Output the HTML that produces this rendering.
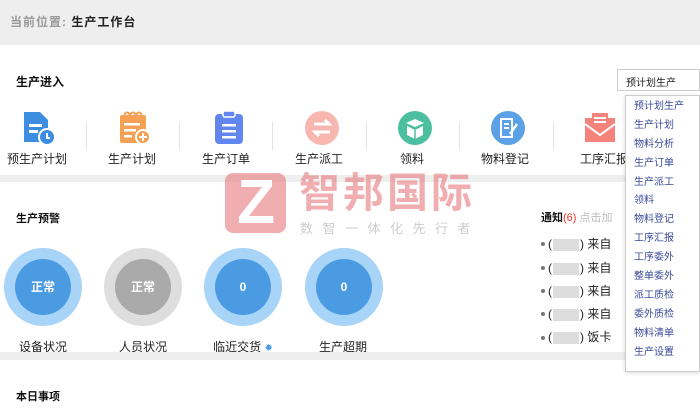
<!DOCTYPE html>
<html><head><meta charset="utf-8"><style>
*{margin:0;padding:0;box-sizing:border-box}
body{width:700px;height:408px;overflow:hidden;background:#fff;font-family:"Liberation Sans","Noto Sans CJK SC",sans-serif;font-size:12px;color:#333;position:relative}
.a{position:absolute}
.ic{position:absolute;top:110px;width:36px;height:36px}
.lb{position:absolute;top:150px;width:90px;text-align:center;font-size:12px;color:#222}
.dv{position:absolute;top:122px;width:1px;height:28px;background:#e3e3e3}
.ring{position:absolute;top:248px;width:78px;height:78px;border-radius:50%;background:#a8d4f8}
.ring div{position:absolute;left:11px;top:11px;width:56px;height:56px;border-radius:50%;background:#4b9be2;color:#fff;font-weight:bold;font-size:12px;text-align:center;line-height:56px}
.cl{position:absolute;top:338px;width:100px;text-align:center;font-size:12px;color:#222}
.dd div{height:18.9px;line-height:18.9px;padding-left:8px;color:#3a4a9a;font-size:10px}
.nt{position:absolute;left:548px;font-size:12px;color:#222}
.nt i{display:inline-block;width:26px;height:12px;background:#ddd;vertical-align:middle;margin:0 1px}
.bl{position:absolute;left:541px;width:4px;height:4px;border-radius:50%;background:#777}
</style></head><body>
<div class="a" style="left:0;top:0;width:700px;height:45px;background:#eeeeee"></div>
<div class="a" style="left:10px;top:13px;font-size:12px;color:#999;font-weight:bold;letter-spacing:1px">当前位置: <span style="color:#222">生产工作台</span></div>
<div class="a" style="left:16px;top:73px;font-weight:bold;font-size:12px;color:#111">生产进入</div>
<div class="a" style="left:617px;top:69px;width:83px;height:22px;border:1px solid #ccc;background:#fff;font-size:10px;padding:4px 0 0 8px;color:#222">预计划生产</div>
<svg class="ic" style="left:20px" viewBox="0 0 36 36"><path d="M4 2h16l8 8v22H4z" fill="#3d8ee0"/><rect x="9" y="14" width="13" height="3" fill="#fff"/><rect x="9" y="20" width="9" height="3" fill="#fff"/><circle cx="27" cy="27" r="8" fill="#3d8ee0" stroke="#fff" stroke-width="2"/><path d="M27 23v5h3" stroke="#fff" stroke-width="2" fill="none"/></svg>
<svg class="ic" style="left:117px" viewBox="0 0 36 36"><rect x="3" y="5" width="26" height="28" rx="2" fill="#f4a156"/><circle cx="10" cy="5" r="2.5" fill="none" stroke="#f4a156" stroke-width="2"/><circle cx="16" cy="5" r="2.5" fill="none" stroke="#f4a156" stroke-width="2"/><circle cx="22" cy="5" r="2.5" fill="none" stroke="#f4a156" stroke-width="2"/><rect x="7" y="13" width="16" height="2.5" fill="#fff"/><rect x="7" y="19" width="12" height="2.5" fill="#fff"/><rect x="7" y="25" width="8" height="2.5" fill="#fff"/><circle cx="26" cy="27" r="7" fill="#f4a156" stroke="#fff" stroke-width="2"/><path d="M26 23v8M22 27h8" stroke="#fff" stroke-width="2"/></svg>
<svg class="ic" style="left:211px" viewBox="0 0 36 36"><rect x="4" y="4" width="28" height="30" rx="4" fill="#6186f0"/><rect x="12" y="1" width="12" height="6" rx="2" fill="#6186f0" stroke="#fff" stroke-width="1.5"/><rect x="11" y="14" width="14" height="2.5" fill="#fff"/><rect x="11" y="20" width="14" height="2.5" fill="#fff"/><rect x="11" y="26" width="14" height="2.5" fill="#fff"/></svg>
<svg class="ic" style="left:304px" viewBox="0 0 36 36"><circle cx="18" cy="18" r="17" fill="#f7b7b0"/><path d="M10 14h15l-4-4M26 22H11l4 4" stroke="#fff" stroke-width="3" fill="none"/></svg>
<svg class="ic" style="left:397px" viewBox="0 0 36 36"><circle cx="18" cy="18" r="17" fill="#4bbf9f"/><path d="M9 13l9-4 9 4-9 4z" fill="#fff"/><path d="M10 16v9l8 4 8-4v-9l-8 4z" fill="#fff"/><path d="M18 20v9" stroke="#4bbf9f" stroke-width="1.5"/></svg>
<svg class="ic" style="left:490px" viewBox="0 0 36 36"><circle cx="18" cy="18" r="17" fill="#5aa1e6"/><path d="M11 9h11v18H11z" fill="none" stroke="#fff" stroke-width="2"/><path d="M14 14h5M14 18h5" stroke="#fff" stroke-width="2"/><path d="M27 14l-7 10" stroke="#fff" stroke-width="2.5"/></svg>
<svg class="ic" style="left:582px" viewBox="0 0 36 36"><rect x="3" y="8" width="30" height="24" fill="#f4837c"/><path d="M3 14l15 11 15-11" stroke="#fff" stroke-width="2" fill="none"/><rect x="10" y="3" width="16" height="14" fill="#f4837c"/><rect x="12" y="7" width="12" height="2" fill="#fff"/><rect x="12" y="11" width="12" height="2" fill="#fff"/></svg>
<div class="lb" style="left:-8px">预生产计划</div>
<div class="lb" style="left:87px">生产计划</div>
<div class="lb" style="left:181px">生产订单</div>
<div class="lb" style="left:274px">生产派工</div>
<div class="lb" style="left:367px">领料</div>
<div class="lb" style="left:460px">物料登记</div>
<div class="lb" style="left:550px;text-align:left;padding-left:30px">工序汇报</div>
<div class="dv" style="left:86px"></div><div class="dv" style="left:179px"></div><div class="dv" style="left:272px"></div><div class="dv" style="left:366px"></div><div class="dv" style="left:459px"></div><div class="dv" style="left:553px"></div>
<div class="a" style="left:0;top:175px;width:625px;height:7px;background:#eeeeee"></div>
<div class="a" style="left:16px;top:210px;font-weight:bold;font-size:11px;color:#111">生产预警</div>
<div class="ring" style="left:4px"><div>正常</div></div>
<div class="ring" style="left:104px;background:#dedede"><div style="background:#aaa">正常</div></div>
<div class="ring" style="left:204px"><div>0</div></div>
<div class="ring" style="left:305px"><div>0</div></div>
<div class="cl" style="left:-7px">设备状况</div>
<div class="cl" style="left:93px">人员状况</div>
<div class="cl" style="left:193px">临近交货 <span style="color:#4b9be2;font-size:10px">✹</span></div>
<div class="cl" style="left:293px">生产超期</div>
<div class="a" style="left:541px;top:209px;font-weight:bold;font-size:11px;color:#111">通知<span style="color:#e33;font-weight:normal">(6)</span> <span style="color:#bbb;font-weight:normal">点击加</span></div>
<div class="bl" style="top:242px"></div><div class="nt" style="top:235px">(<i></i>) 来自</div>
<div class="bl" style="top:266px"></div><div class="nt" style="top:259px">(<i></i>) 来自</div>
<div class="bl" style="top:289px"></div><div class="nt" style="top:282px">(<i></i>) 来自</div>
<div class="bl" style="top:312px"></div><div class="nt" style="top:305px">(<i></i>) 来自</div>
<div class="bl" style="top:336px"></div><div class="nt" style="top:328px">(<i></i>) 饭卡</div>
<div class="a" style="left:0;top:352px;width:625px;height:8px;background:#eeeeee"></div>
<div class="a" style="left:16px;top:388px;font-weight:bold;font-size:11px;color:#111">本日事项</div>
<div class="a" style="left:225px;top:173px;width:61px;height:60px;border-radius:8px;background:rgba(230,120,125,.6)"></div>
<div class="a" style="left:231px;top:170px;width:50px;font-size:62px;font-weight:bold;color:#fff;font-family:'Liberation Sans',sans-serif;line-height:66px;text-align:center">Z</div>
<div class="a" style="left:299px;top:169px;font-size:41px;line-height:48px;color:rgba(230,120,125,.6);letter-spacing:3px;font-weight:bold">智邦国际</div>
<div class="a" style="left:300px;top:218px;font-size:13px;color:rgba(170,170,170,.6);letter-spacing:9.5px">数智一体化先行者</div>
<div class="a dd" style="left:625px;top:95px;width:75px;height:277px;background:#fff;border:1px solid #ccc;box-shadow:0 1px 4px rgba(0,0,0,.15);padding-top:2px">
<div>预计划生产</div><div>生产计划</div><div>物料分析</div><div>生产订单</div><div>生产派工</div><div>领料</div><div>物料登记</div><div>工序汇报</div><div>工序委外</div><div>整单委外</div><div>派工质检</div><div>委外质检</div><div>物料清单</div><div>生产设置</div>
</div>
</body></html>
